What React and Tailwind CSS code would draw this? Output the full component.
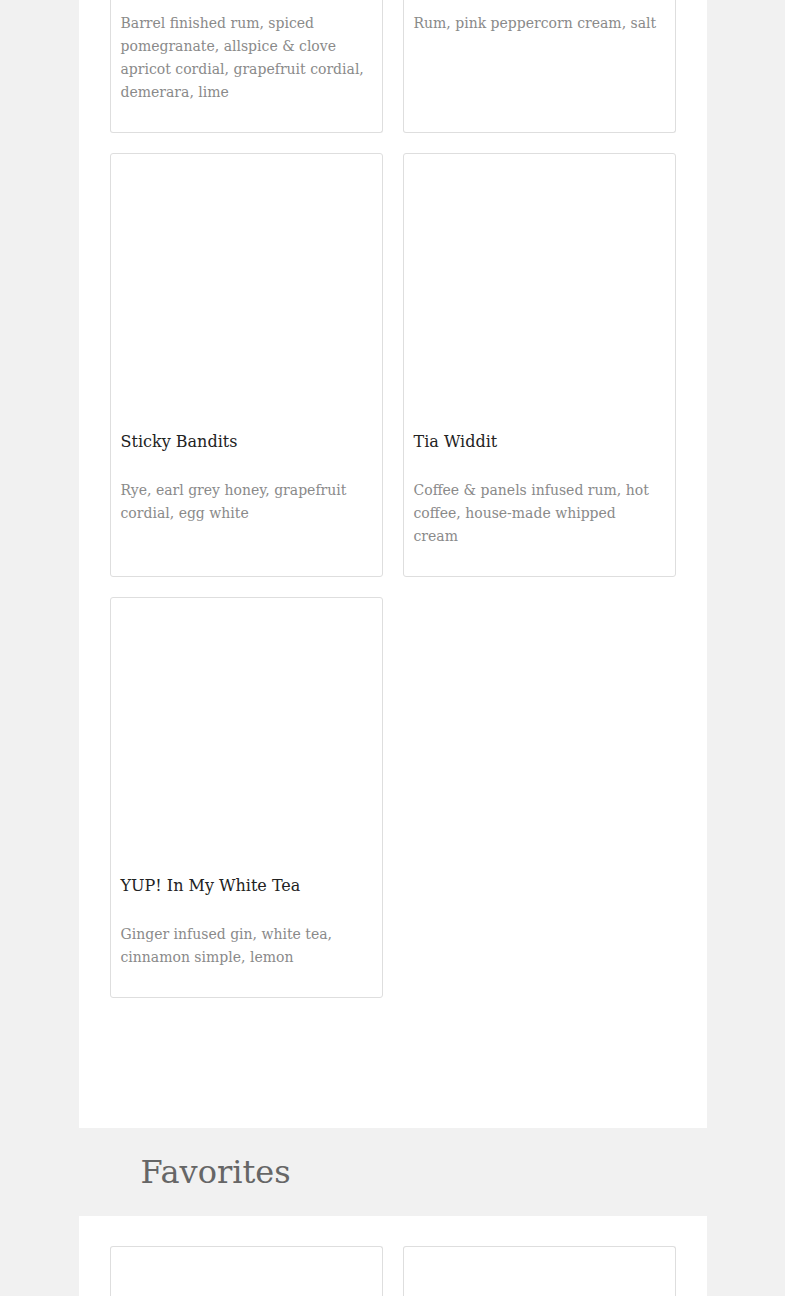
const font = { fontFamily: '"DejaVu Serif", "Liberation Serif", serif' }

const drinks = [
  {
    name: 'Sticky Bandits',
    desc: 'Rye, earl grey honey, grapefruit cordial, egg white',
  },
  {
    name: 'Tia Widdit',
    desc: 'Coffee & panels infused rum, hot coffee, house-made whipped cream',
  },
  {
    name: 'YUP! In My White Tea',
    desc: 'Ginger infused gin, white tea, cinnamon simple, lemon',
  },
]

const cutCards = [
  'Barrel finished rum, spiced pomegranate, allspice & clove apricot cordial, grapefruit cordial, demerara, lime',
  'Rum, pink peppercorn cream, salt',
]

function DrinkCard({ name, desc }) {
  return (
    <article className="flex flex-col rounded-[3px] border border-[#dedede] bg-white">
      <div className="h-[261px]" />
      <div className="px-[10px] pt-[14px] pb-[28px]">
        <h3 className="text-[16px] leading-[26px] text-[#222]">{name}</h3>
        <p className="mt-[24px] text-[14px] leading-[23px] text-[#8a8a8a]">{desc}</p>
      </div>
    </article>
  )
}

export default function App() {
  return (
    <div className="min-h-[1296px] bg-[#f1f1f1]" style={font}>
      <div className="mx-auto w-[628px]">
        {/* Drinks panel */}
        <section className="bg-white px-[31px] pb-[130px]">
          <div className="grid grid-cols-2 gap-x-[20px] gap-y-[20px]">
            {cutCards.map((desc) => (
              <div
                key={desc}
                className="h-[133px] rounded-b-[3px] border-x border-b border-[#dedede] px-[10px] pt-[12px]"
              >
                <p className="text-[14px] leading-[23px] text-[#8a8a8a]">{desc}</p>
              </div>
            ))}
            {drinks.map((d) => (
              <DrinkCard key={d.name} {...d} />
            ))}
          </div>
        </section>

        {/* Favorites header */}
        <div className="flex h-[88px] items-center pl-[62px]">
          <h2 className="text-[32px] font-light text-[#666]">Favorites</h2>
        </div>

        <section className="bg-white px-[31px] pt-[30px]">
          <div className="grid grid-cols-2 gap-x-[20px]">
            <div className="h-[60px] rounded-t-[3px] border-x border-t border-[#dedede]" />
            <div className="h-[60px] rounded-t-[3px] border-x border-t border-[#dedede]" />
          </div>
        </section>
      </div>
    </div>
  )
}
